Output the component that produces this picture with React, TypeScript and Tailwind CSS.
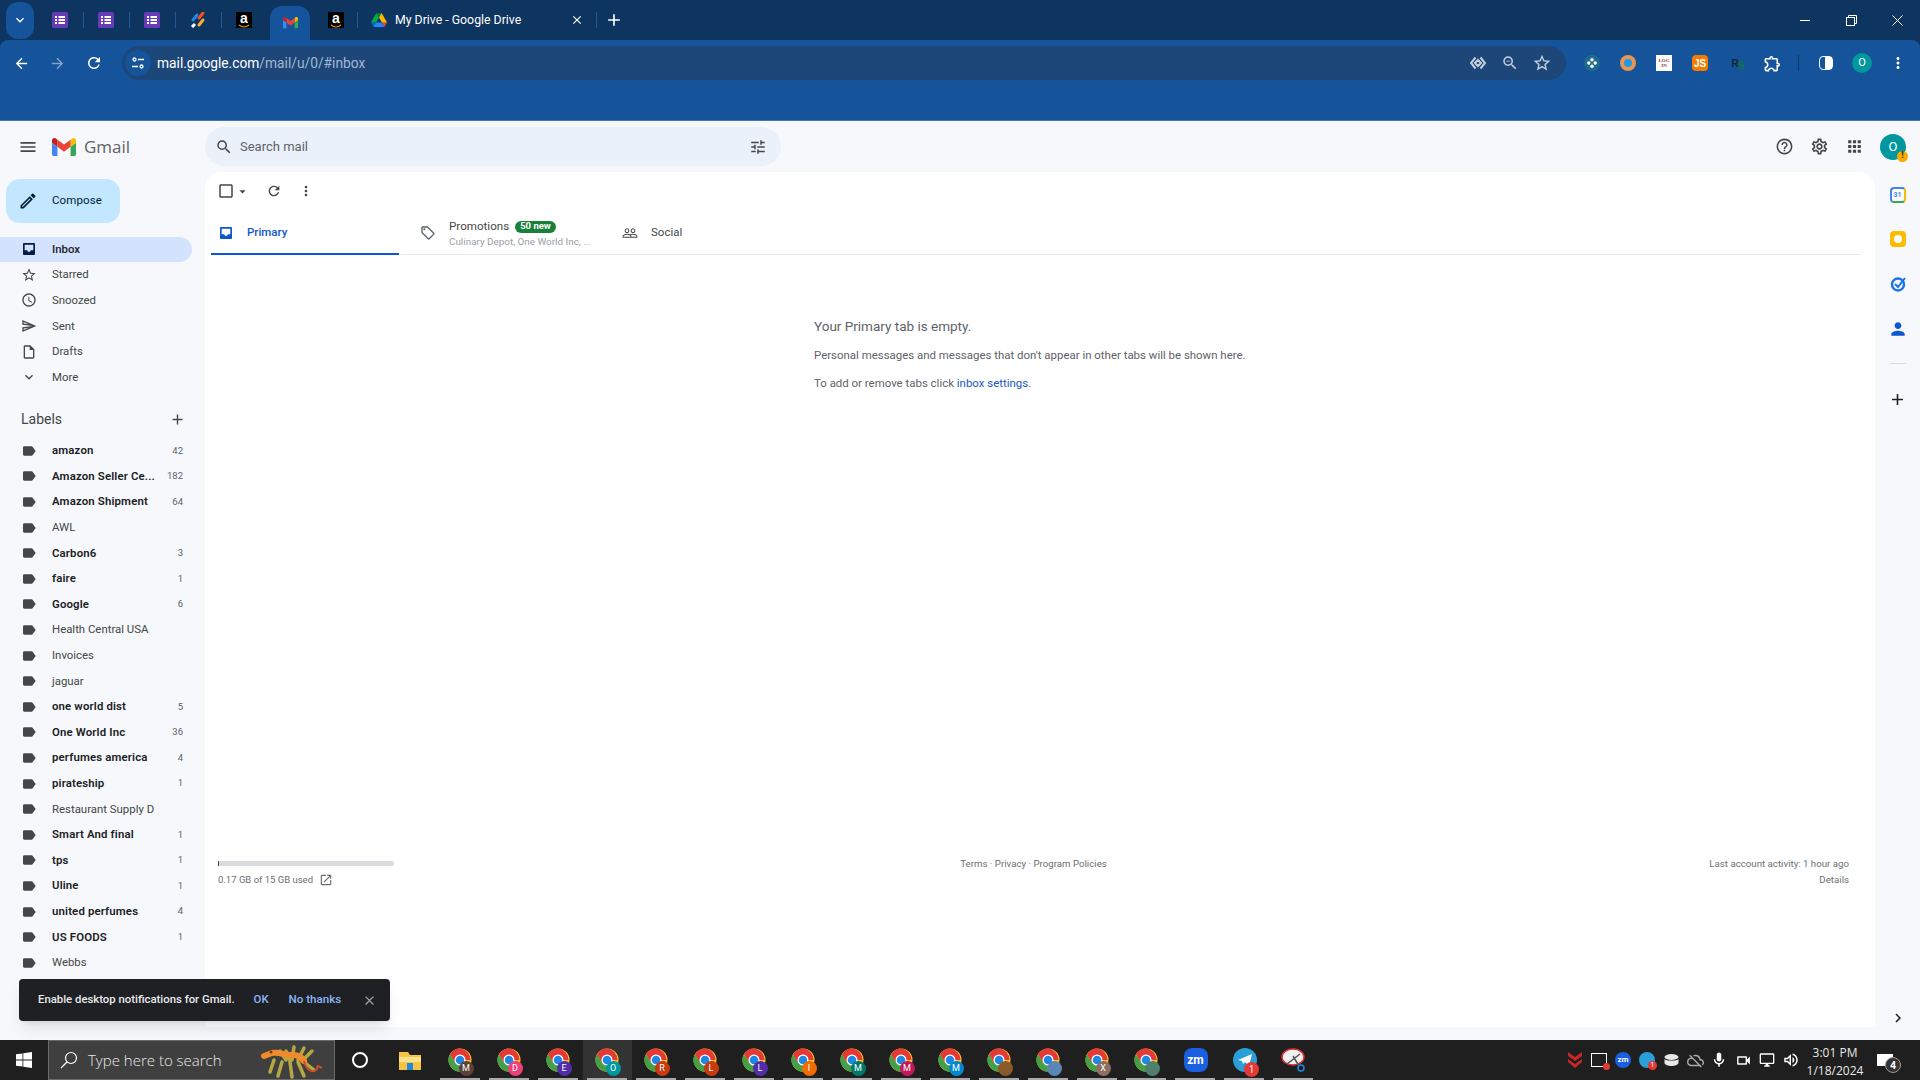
import type { ReactNode } from "react";
import {
  MdAdd,
  MdApps,
  MdArrowBack,
  MdArrowDropDown,
  MdArrowForward,
  MdCheckBoxOutlineBlank,
  MdChevronRight,
  MdClose,
  MdExpandMore,
  MdHelpOutline,
  MdLabel,
  MdMenu,
  MdMoreVert,
  MdOpenInNew,
  MdOutlineCreate,
  MdOutlineExtension,
  MdOutlineInsertDriveFile,
  MdOutlineLocalOffer,
  MdOutlineSend,
  MdOutlineSettings,
  MdOutlineStarBorder,
  MdOutlineWatchLater,
  MdPeopleOutline,
  MdRefresh,
  MdSearch,
  MdStarBorder,
  MdTune,
  MdZoomOut,
  MdPerson,
  MdOutlineMic,
  MdOutlineVideocam,
  MdOutlineDesktopWindows,
  MdOutlineVolumeUp,
  MdOutlineCloudOff,
} from "react-icons/md";

const labels = [
  { name: "amazon", count: "42", bold: true },
  { name: "Amazon Seller Ce...", count: "182", bold: true },
  { name: "Amazon Shipment", count: "64", bold: true },
  { name: "AWL", count: "", bold: false },
  { name: "Carbon6", count: "3", bold: true },
  { name: "faire", count: "1", bold: true },
  { name: "Google", count: "6", bold: true },
  { name: "Health Central USA", count: "", bold: false },
  { name: "Invoices", count: "", bold: false },
  { name: "jaguar", count: "", bold: false },
  { name: "one world dist", count: "5", bold: true },
  { name: "One World Inc", count: "36", bold: true },
  { name: "perfumes america", count: "4", bold: true },
  { name: "pirateship", count: "1", bold: true },
  { name: "Restaurant Supply D", count: "", bold: false },
  { name: "Smart And final", count: "1", bold: true },
  { name: "tps", count: "1", bold: true },
  { name: "Uline", count: "1", bold: true },
  { name: "united perfumes", count: "4", bold: true },
  { name: "US FOODS", count: "1", bold: true },
  { name: "Webbs", count: "", bold: false },
];

const chromeWindows = [
  { letter: "M", color: "#5d4037" },
  { letter: "D", color: "#ec407a" },
  { letter: "E", color: "#512da8" },
  { letter: "O", color: "#00979e", active: true },
  { letter: "R", color: "#c53a0e" },
  { letter: "L", color: "#c53a0e" },
  { letter: "L", color: "#512da8" },
  { letter: "I", color: "#ef6c00" },
  { letter: "M", color: "#00796b" },
  { letter: "M", color: "#c2185b" },
  { letter: "M", color: "#0288d1" },
  { letter: "", color: "#8a5a2b" },
  { letter: "", color: "#5b86b8" },
  { letter: "X", color: "#8d6e63" },
  { letter: "", color: "#4f7f6d" },
];

function InboxIcon({ color }: { color: string }) {
  return (
    <svg width="16" height="16" viewBox="0 0 24 24" fill={color}>
      <path fillRule="evenodd" d="M4.5 3h15A1.5 1.5 0 0 1 21 4.5v15a1.5 1.5 0 0 1-1.5 1.5h-15A1.5 1.5 0 0 1 3 19.5v-15A1.5 1.5 0 0 1 4.5 3zM5.5 5.5v8.5h4a2.5 2.5 0 0 0 5 0h4V5.5z" />
    </svg>
  );
}

function GmailLogo({ size = 24 }: { size?: number }) {
  return (
    <svg width={size} height={(size * 66) / 88} viewBox="52 42 88 66">
      <path fill="#4285f4" d="M58 108h14V74L52 59v43c0 3.32 2.69 6 6 6" />
      <path fill="#34a853" d="M120 108h14c3.32 0 6-2.69 6-6V59l-20 15" />
      <path fill="#fbbc04" d="M120 48v26l20-15v-8c0-7.42-8.47-11.65-14.4-7.2" />
      <path fill="#ea4335" d="M72 74V48l24 18 24-18v26L96 92" />
      <path fill="#c5221f" d="M52 51v8l20 15V48l-5.6-4.2c-5.94-4.45-14.4-.22-14.4 7.2" />
    </svg>
  );
}

function DriveLogo() {
  return (
    <svg width="16" height="14" viewBox="0 0 87.3 78">
      <path d="m6.6 66.85 3.85 6.65c.8 1.4 1.95 2.5 3.3 3.3l13.75-23.8h-27.5c0 1.55.4 3.1 1.2 4.5z" fill="#0066da" />
      <path d="m43.65 25-13.75-23.8c-1.35.8-2.5 1.9-3.3 3.3l-25.4 44a9.06 9.06 0 0 0 -1.2 4.5h27.5z" fill="#00ac47" />
      <path d="m73.55 76.8c1.35-.8 2.5-1.9 3.3-3.3l1.6-2.75 7.65-13.25c.8-1.4 1.2-2.95 1.2-4.5h-27.502l5.852 11.5z" fill="#ea4335" />
      <path d="m43.65 25 13.75-23.8c-1.35-.8-2.9-1.2-4.5-1.2h-18.5c-1.6 0-3.15.45-4.5 1.2z" fill="#00832d" />
      <path d="m59.8 53h-32.3l-13.75 23.8c1.35.8 2.9 1.2 4.5 1.2h50.8c1.6 0 3.15-.45 4.5-1.2z" fill="#2684fc" />
      <path d="m73.4 26.5-12.7-22c-.8-1.4-1.95-2.5-3.3-3.3l-13.75 23.8 16.15 28h27.45c0-1.55-.4-3.1-1.2-4.5z" fill="#ffba00" />
    </svg>
  );
}

function FormsIcon() {
  return (
    <svg width="16" height="16" viewBox="0 0 16 16">
      <rect width="16" height="16" rx="1.5" fill="#673ab7" />
      <path d="M3 4h2v2H3zM6.5 4H13v2H6.5zM3 7h2v2H3zM6.5 7H13v2H6.5zM3 10h2v2H3zM6.5 10H13v2H6.5z" fill="#fff" />
    </svg>
  );
}

function AmazonIcon() {
  return (
    <div className="relative flex h-4 w-4 flex-col items-center bg-black">
      <span className="font-['Liberation_Sans',sans-serif] text-[14px] leading-[13px] font-bold text-white">a</span>
      <svg className="absolute bottom-0 left-0.5" width="12" height="4" viewBox="0 0 12 4">
        <path d="M1 1c3 2.4 7 2.4 10 0" stroke="#f90" strokeWidth="1.2" fill="none" />
      </svg>
    </div>
  );
}

function TaskIcon() {
  return (
    <svg width="16" height="16" viewBox="0 0 16 16">
      <path d="M9 6l4-5" stroke="#f4511e" strokeWidth="3" strokeLinecap="round" />
      <path d="M3 8l4-5" stroke="#1e88e5" strokeWidth="3" strokeLinecap="round" />
      <path d="M9 13l4-5" stroke="#fbb02d" strokeWidth="3" strokeLinecap="round" />
      <path d="M2 15l3-3" stroke="#fff" strokeWidth="3" />
    </svg>
  );
}

function ChromeBall({ size = 24 }: { size?: number }) {
  return (
    <svg width={size} height={size} viewBox="0 0 48 48">
      <circle cx="24" cy="24" r="23" fill="#fbc02d" />
      <path d="M24 1A23 23 0 0 0 4 12.5L14 30l10-6h21a23 23 0 0 0-21-23z" fill="#e53935" />
      <path d="M4 12.5A23 23 0 0 0 24 47l10-17-20 0z" fill="#43a047" />
      <circle cx="24" cy="24" r="11" fill="#fff" />
      <circle cx="24" cy="24" r="8.5" fill="#1e88e5" />
    </svg>
  );
}

function Sep() {
  return <div className="h-4 w-px bg-[#1f5a96]" />;
}

function TabStrip() {
  return (
    <div className="flex h-10 items-center bg-[#0e3460] text-white">
      <div className="ml-1.5 flex h-[37px] w-7 items-center justify-center rounded-xl bg-[#15539a]">
        <MdExpandMore size={16} />
      </div>
      <div className="ml-[18px] flex items-center">
        <FormsIcon />
        <div className="mx-[14.5px]"><Sep /></div>
        <FormsIcon />
        <div className="mx-[14.5px]"><Sep /></div>
        <FormsIcon />
        <div className="mx-[14.5px]"><Sep /></div>
        <TaskIcon />
        <div className="mx-[14.5px]"><Sep /></div>
        <AmazonIcon />
      </div>
      <div className="mt-[6px] ml-[18px] flex h-[34px] w-10 items-center justify-center rounded-t-xl bg-[#15539a]">
        <GmailLogo size={15} />
      </div>
      <div className="ml-[18px]"><AmazonIcon /></div>
      <div className="mx-[13px]"><Sep /></div>
      <DriveLogo />
      <span className="ml-[8px] w-[175px] font-['Roboto',sans-serif] text-[12.3px]">My Drive - Google Drive</span>
      <MdClose size={14} />
      <div className="ml-[12px]"><Sep /></div>
      <MdAdd size={20} className="ml-[7px]" />
      <div className="flex-1" />
      <div className="flex w-[138px] items-center">
        <div className="flex w-[46px] justify-center"><div className="h-px w-[10px] bg-white" /></div>
        <div className="flex w-[46px] justify-center">
          <svg width="11" height="11" viewBox="0 0 11 11" fill="none" stroke="#fff">
            <rect x="0.5" y="2.5" width="8" height="8" />
            <path d="M2.5 2.5v-2h8v8h-2" />
          </svg>
        </div>
        <div className="flex w-[46px] justify-center">
          <svg width="11" height="11" viewBox="0 0 11 11" stroke="#fff"><path d="M.5.5l10 10M10.5.5l-10 10" /></svg>
        </div>
      </div>
    </div>
  );
}

function Toolbar() {
  return (
    <div className="h-[81px] border-b border-[#3a7ab8] bg-[#0e3460]">
      <div className="h-20 rounded-t-lg bg-[#15539a] pt-1.5">
        <div className="flex h-[34px] items-center text-white">
          <MdArrowBack size={17} className="ml-[13px]" />
          <MdArrowForward size={17} className="ml-[19px] text-[#7fa3c9]" />
          <MdRefresh size={18} className="ml-[19px]" />
          <div className="ml-[19px] flex h-[34px] w-[1444px] items-center rounded-full bg-[#1c4778]">
            <div className="ml-[3px] flex h-[26px] w-[26px] items-center justify-center rounded-full bg-[#15539a]">
              <svg width="14" height="14" viewBox="0 0 14 14" fill="none" stroke="#fff" strokeWidth="1.3">
                <circle cx="3.5" cy="3.5" r="1.5" /><path d="M7 3.5h6M1 10.5h6" /><circle cx="10.5" cy="10.5" r="1.5" />
              </svg>
            </div>
            <span className="ml-[6px] font-['Roboto',sans-serif] text-[13.75px]">
              mail.google.com<span className="text-[#a3b8cf]">/mail/u/0/#inbox</span>
            </span>
            <div className="flex-1" />
            <svg width="16" height="14" viewBox="0 0 16 14" fill="none" stroke="#c5d0dc" strokeWidth="2">
              <path d="M5.5 1.5L1 7l4.500 5.500M10.500 1.500L15 7l-4.500 5.500M8 4l3 3-3 3-3-3z" />
            </svg>
            <MdZoomOut size={18} className="ml-[15px] text-[#c5d0dc]" />
            <MdStarBorder size={20} className="ml-[13px] text-[#c5d0dc]" />
            <div className="w-[14px]" />
          </div>
          <div className="ml-[18px] flex h-4 w-4 items-center justify-center rounded-full bg-[#1f6d8c]">
            <svg width="10" height="10" viewBox="0 0 10 10" fill="#fff"><circle cx="5" cy="1.800" r="1.700" /><circle cx="5" cy="8.200" r="1.700" /><circle cx="1.800" cy="5" r="1.700" /><circle cx="8.200" cy="5" r="1.700" /></svg>
          </div>
          <div className="ml-5 flex h-4 w-4 items-center justify-center rounded-full bg-[#e8954f]">
            <div className="h-2 w-2 rounded-full bg-[#1e9be8]" />
          </div>
          <div className="ml-5 flex h-4 w-4 items-center justify-center bg-white text-center font-['Liberation_Serif',serif] text-[5px] leading-none font-bold text-[#8c3a3a]">LOG IN</div>
          <div className="ml-5 flex h-4 w-4 items-center justify-center rounded-sm bg-[#f57c00] font-['Liberation_Sans',sans-serif] text-[10px] font-bold">JS</div>
          <div className="ml-[22px] flex h-4 w-4 items-center justify-center font-['Liberation_Sans',sans-serif] text-[10px] font-bold text-[#14233a]">
            R<span className="-ml-px translate-y-0.5 text-[#0c7a3e]">S</span>
          </div>
          <MdOutlineExtension size={19} className="ml-[17px]" />
          <div className="ml-[16px] h-[16px] w-px bg-[#0e3460]" />
          <div className="ml-[20px] flex h-[14px] w-[14px] rounded-sm border border-white">
            <div className="w-[5px]" />
            <div className="flex-1 bg-white" />
          </div>
          <div className="ml-[19px] flex h-5 w-5 items-center justify-center rounded-full bg-[#00979e] font-['Roboto',sans-serif] text-[11px]">O</div>
          <MdMoreVert size={18} className="ml-[17px]" />
        </div>
      </div>
    </div>
  );
}

function NavRow({ icon, label, active }: { icon: ReactNode; label: string; active?: boolean }) {
  return (
    <div className={`flex h-[25.6px] w-[192px] items-center rounded-r-full pl-[21px] text-[11.4px] ${active ? "bg-[#d3e3fd] font-medium text-[#202124]" : "text-[#444746]"}`}>
      <span className={`flex w-[31px] ${active ? "text-[#041e49]" : "text-[#444746]"}`}>{icon}</span>
      {label}
    </div>
  );
}

function Sidebar() {
  return (
    <div className="w-[205px] shrink-0">
      <div className="mt-[7px] ml-1.5 flex h-[44px] w-[114px] items-center rounded-[14px] bg-[#c2e7ff] text-[11.5px] text-[#001d35]">
        <MdOutlineCreate size={20} className="ml-[12px]" />
        <span className="ml-[14px] tracking-[0.1px]">Compose</span>
      </div>
      <div className="mt-[13.5px]">
        <NavRow active label="Inbox" icon={<InboxIcon color="#041e49" />} />
        <NavRow label="Starred" icon={<MdOutlineStarBorder size={16} />} />
        <NavRow label="Snoozed" icon={<MdOutlineWatchLater size={16} />} />
        <NavRow label="Sent" icon={<MdOutlineSend size={16} />} />
        <NavRow label="Drafts" icon={<MdOutlineInsertDriveFile size={16} />} />
        <NavRow label="More" icon={<MdExpandMore size={16} />} />
      </div>
      <div className="mt-[16.5px] flex h-[26px] w-[192px] items-center justify-between pr-[6px] pl-[21px] text-[14px] text-[#444746]">
        Labels
        <MdAdd size={17} />
      </div>
      <div className="mt-[5.5px]">
        {labels.map((l) => (
          <div key={l.name} className="flex h-[25.6px] w-[192px] items-center pr-[9px] pl-[21px] text-[11.4px]">
            <MdLabel size={16} className="w-[31px] shrink-0 pr-[15px] text-[#444746]" />
            <span className={l.bold ? "flex-1 font-semibold tracking-[0.15px] text-[#202124]" : "flex-1 text-[#444746]"}>{l.name}</span>
            <span className="text-[9.5px] text-[#5f6368]">{l.count}</span>
          </div>
        ))}
      </div>
    </div>
  );
}

function MailPanel() {
  return (
    <div className="flex w-[1670px] flex-col rounded-t-2xl bg-white text-[#5f6368]">
      <div className="flex h-[38px] items-center pl-[12px] text-[#444746]">
        <MdCheckBoxOutlineBlank size={18} />
        <MdArrowDropDown size={15} className="ml-0" />
        <MdRefresh size={16} className="ml-[16px]" />
        <MdMoreVert size={16} className="ml-[16px]" />
      </div>
      <div className="mx-1.5 flex h-[45px] w-[1649px] border-b border-[#e6e8eb]">
        <div className="-mb-px flex w-[188px] items-center border-b-2 border-[#0b57d0] pt-0.5 pl-[7px] text-[11.5px] font-medium text-[#0b57d0]">
          <InboxIcon color="#0b57d0" />
          <span className="ml-[13px]">Primary</span>
        </div>
        <div className="flex w-[211px] items-center pt-0.5 pl-[21px]">
          <MdOutlineLocalOffer size={16} />
          <div className="ml-[13px]">
            <div className="flex h-[16px] items-center text-[11.6px] text-[#444746]">
              Promotions
              <span className="ml-[6px] flex h-3 items-center rounded-full bg-[#188038] px-[5px] text-[9.5px] font-bold text-white">50 new</span>
            </div>
            <div className="text-[9.9px] leading-[13px] text-[#9aa0a6]">Culinary Depot, One World Inc, ...</div>
          </div>
        </div>
        <div className="flex items-center pt-0.5 pl-[12px] text-[11.5px] text-[#444746]">
          <MdPeopleOutline size={16} />
          <span className="ml-[13px]">Social</span>
        </div>
      </div>
      <div className="h-[600px] pt-[62px] pl-[609px]">
        <div className="text-[13.5px] leading-[18px]">Your Primary tab is empty.</div>
        <div className="mt-[12px] text-[11.45px] leading-[16px]">Personal messages and messages that don't appear in other tabs will be shown here.</div>
        <div className="mt-[12px] text-[11.45px] leading-[16px]">
          To add or remove tabs click <span className="text-[#1a56c4]">inbox settings</span>.
        </div>
      </div>
      <div className="grid grid-cols-3 pr-[26px] pl-[13px] text-[9.7px] leading-[16px] text-[#6b6f73]">
        <div>
          <div className="mt-1.5 h-[5px] w-[176px] rounded-sm bg-[#dadce0]">
            <div className="h-[5px] w-px bg-[#444746]" />
          </div>
          <div className="mt-1.5 flex items-center text-[9.5px]">
            0.17 GB of 15 GB used
            <MdOpenInNew size={14} className="ml-[6px]" />
          </div>
        </div>
        <div className="pt-px text-center">Terms · Privacy · Program Policies</div>
        <div className="pt-px text-right">
          <div>Last account activity: 1 hour ago</div>
          <div>Details</div>
        </div>
      </div>
    </div>
  );
}

function RightRail() {
  return (
    <div className="flex w-[45px] flex-col items-center text-[#202124]">
      <div className="mt-[15px] flex h-4 w-4 items-center justify-center rounded-sm border-2 border-[#4285f4] border-r-[#fbbc04] border-b-[#34a853] bg-white text-[7px] font-bold text-[#4285f4]">31</div>
      <div className="mt-[28px] flex h-4 w-4 items-center justify-center rounded-sm bg-[#fbbc04]">
        <div className="h-2 w-2 rounded-full bg-white" />
      </div>
      <svg className="mt-[29px]" width="16" height="16" viewBox="0 0 16 16" fill="none">
        <circle cx="8" cy="8.500" r="6" stroke="#1a73e8" strokeWidth="2.400" />
        <path d="M5 8l3 3 7-9" stroke="#1a73e8" strokeWidth="2" />
      </svg>
      <MdPerson size={20} className="mt-[27px] text-[#0b57d0]" />
      <div className="mt-[24px] h-px w-4 bg-[#dadce0]" />
      <MdAdd size={19} className="mt-[26px]" />
      <div className="flex-1" />
      <MdChevronRight size={18} />
    </div>
  );
}

function TrayIcon({ children }: { children: ReactNode }) {
  return <div className="flex h-10 w-6 items-center justify-center text-white">{children}</div>;
}

function SeaDragon() {
  return (
    <svg className="absolute top-px right-2" width="66" height="38" viewBox="0 0 66 38" fill="none">
      <path d="M20 9l6 9M26 9l4 10M34 5l-2 13M44 6l-6 12M52 9l-10 10M14 18l-4 12M22 20l-4 14M30 20l2 15M38 20l6 14M44 20l10 8" stroke="#b5a742" strokeWidth="3.500" strokeLinecap="round" />
      <path d="M4 14l8-3c8-1 12 2 20 2s10 3 12 6" stroke="#ef8b2c" strokeWidth="6" strokeLinecap="round" />
      <path d="M44 19c2 9 8 12 12 9s-2-6 6-2" stroke="#c9502b" strokeWidth="2" />
      <circle cx="11" cy="10" r="1.500" fill="#7a3b10" />
    </svg>
  );
}

function Taskbar() {
  return (
    <div className="flex h-10 items-center bg-[#1f1f1f] font-['Open_Sans',sans-serif] text-white">
      <div className="flex w-12 justify-center">
        <svg width="16" height="16" viewBox="0 0 16 16" fill="#fff">
          <path d="M0 2.300l6.500-.9v6.200H0zM7.300 1.300L16 0v7.600H7.300zM0 8.400h6.500v6.200L0 13.700zM7.300 8.400H16V16l-8.700-1.200z" />
        </svg>
      </div>
      <div className="relative flex h-10 w-[287px] items-center border border-[#6b6b6b] bg-[#3f3f3f]">
        <svg className="ml-[11px]" width="18" height="18" viewBox="0 0 18 18" fill="none" stroke="#fff" strokeWidth="1.200">
          <circle cx="11" cy="7" r="5.500" /><path d="M7 11l-6 6" />
        </svg>
        <span className="ml-[10px] text-[15px] font-light text-[#e8e8e8]">Type here to search</span>
        <SeaDragon />
      </div>
      <div className="flex w-[50px] justify-center">
        <div className="h-4 w-4 rounded-full border-2 border-white" />
      </div>
      <div className="flex w-[50px] justify-center">
        <svg width="22" height="20" viewBox="0 0 22 20">
          <path d="M0 2h9l2 3h11v15H0z" fill="#f6c445" />
          <rect x="0" y="7" width="22" height="5" fill="#ffe08a" />
          <rect x="8" y="13" width="6" height="7" fill="#1e88e5" />
        </svg>
      </div>
      <div className="ml-px flex">
        {chromeWindows.map((w, i) => (
          <div key={i} className={`relative flex h-10 w-[49px] items-center justify-center ${w.active ? "bg-[#333333]" : ""}`}>
            <div className="relative -translate-x-px">
              <ChromeBall />
              <div className="absolute -right-0.5 -bottom-1 flex h-[15px] w-[15px] items-center justify-center rounded-full font-['Roboto',sans-serif] text-[9px]" style={{ backgroundColor: w.color }}>
                {w.letter}
              </div>
            </div>
            <div className="absolute right-[5px] bottom-0 left-[4px] h-0.5 bg-[#a9a9a9]" />
          </div>
        ))}
        <div className="relative flex h-10 w-[49px] items-center justify-center">
          <div className="flex h-6 w-6 items-center justify-center rounded-lg bg-[#1a5fe0] font-['Roboto',sans-serif] text-[12px] font-bold">zm</div>
          <div className="absolute right-[5px] bottom-0 left-[4px] h-0.5 bg-[#a9a9a9]" />
        </div>
        <div className="relative flex h-10 w-[49px] items-center justify-center">
          <div className="flex h-6 w-6 items-center justify-center rounded-full bg-[#2a9fd8]">
            <svg width="14" height="12" viewBox="0 0 14 12" fill="#fff"><path d="M0 6l14-6-3 12-4-4-2 2-1-3z" /></svg>
          </div>
          <div className="absolute right-[10px] bottom-[3px] flex h-[15px] w-[15px] items-center justify-center rounded-full bg-[#e53935] text-[10px]">1</div>
          <div className="absolute right-[5px] bottom-0 left-[4px] h-0.5 bg-[#a9a9a9]" />
        </div>
        <div className="relative flex h-10 w-[49px] items-center justify-center">
          <svg width="26" height="24" viewBox="0 0 26 24" fill="none">
            <ellipse cx="12" cy="9" rx="11" ry="8" fill="#f1f1f1" stroke="#d33" strokeWidth="1.500" />
            <path d="M6 16l13-10M12 8l6 10" stroke="#555" strokeWidth="1.500" />
            <circle cx="20" cy="20" r="3" stroke="#1e88e5" strokeWidth="1.500" />
          </svg>
          <div className="absolute right-[5px] bottom-0 left-[4px] h-0.5 bg-[#a9a9a9]" />
        </div>
      </div>
      <div className="flex-1" />
      <TrayIcon>
        <svg width="14" height="16" viewBox="0 0 14 16" fill="#c62828"><path d="M0 0l7 5 7-5v4L7 9 0 4zM0 7l7 5 7-5v3l-7 6-7-6z" /></svg>
      </TrayIcon>
      <TrayIcon>
        <div className="relative h-[14px] w-4 border border-white">
          <div className="absolute -right-1 -bottom-1 h-[7px] w-[7px] rounded-full bg-[#e53935]" />
        </div>
      </TrayIcon>
      <TrayIcon>
        <div className="flex h-4 w-4 items-center justify-center rounded-full bg-[#1a5fe0] font-['Roboto',sans-serif] text-[8px] font-bold">zm</div>
      </TrayIcon>
      <TrayIcon>
        <div className="relative h-4 w-4 rounded-full bg-[#2a9fd8]">
          <div className="absolute -right-0.5 -bottom-0.5 flex h-[9px] w-[9px] items-center justify-center rounded-full bg-[#e53935] text-[7px]">1</div>
        </div>
      </TrayIcon>
      <TrayIcon>
        <svg width="15" height="12" viewBox="0 0 15 12" fill="#e8e8e8">
          <ellipse cx="7.500" cy="3" rx="7" ry="3" /><path d="M.5 5c1 2 13 2 14 0v4c-1 4-13 4-14 0z" />
        </svg>
      </TrayIcon>
      <TrayIcon><MdOutlineCloudOff size={17} className="text-[#a9a9a9]" /></TrayIcon>
      <TrayIcon><MdOutlineMic size={18} /></TrayIcon>
      <TrayIcon><MdOutlineVideocam size={17} /></TrayIcon>
      <TrayIcon><MdOutlineDesktopWindows size={16} /></TrayIcon>
      <TrayIcon><MdOutlineVolumeUp size={18} /></TrayIcon>
      <div className="w-[64px] pt-[3px] text-center text-[12px] leading-[18px] whitespace-nowrap text-[#e8e8e8]">
        <div>3:01 PM</div>
        <div>1/18/2024</div>
      </div>
      <div className="flex w-[53px] pl-[10px]">
        <div className="relative h-3 w-4 bg-white">
          <div className="absolute -right-2 -bottom-[7px] flex h-4 w-4 items-center justify-center rounded-full border border-[#999] bg-[#333] text-[10px] font-bold">4</div>
        </div>
      </div>
    </div>
  );
}

export default function App() {
  return (
    <div className="relative flex h-[1080px] w-[1920px] flex-col overflow-hidden bg-[#f6f8fc] font-['Roboto',sans-serif]">
      <TabStrip />
      <Toolbar />
      <div className="flex h-[51px] items-center text-[#444746]">
        <MdMenu size={20} className="ml-[18px]" />
        <div className="ml-[14px]"><GmailLogo size={24} /></div>
        <span className="ml-[8px] w-[121px] font-['Open_Sans',sans-serif] text-[17px] text-[#5f6368]">Gmail</span>
        <div className="flex h-[39px] w-[576px] items-center rounded-full bg-[#eaf1fb]">
          <MdSearch size={18} className="ml-[10px]" />
          <span className="ml-[7px] text-[13px] text-[#5f6368]">Search mail</span>
          <div className="flex-1" />
          <MdTune size={18} className="mr-[14px]" />
        </div>
        <div className="flex-1" />
        <MdHelpOutline size={19} />
        <MdOutlineSettings size={19} className="ml-[16px]" />
        <MdApps size={19} className="ml-[16px]" />
        <div className="relative mr-[14px] ml-[16px] flex h-[26px] w-[26px] items-center justify-center rounded-full bg-[#00979e] text-[13px] text-white">
          O
          <div className="absolute -right-0.5 -bottom-0.5 flex h-[11px] w-[11px] items-center justify-center rounded-full bg-[#f9ab00] text-[9px] font-bold text-[#202124]">!</div>
        </div>
      </div>
      <div className="flex h-[868px] items-stretch overflow-hidden">
        <Sidebar />
        <div className="flex pb-[13px]">
          <MailPanel />
        </div>
        <div className="flex pb-[13px]">
          <RightRail />
        </div>
      </div>
      <Taskbar />
      <div className="absolute top-[979px] left-[19px] flex h-[42px] w-[371px] items-center rounded bg-[#1f2023] pl-[19px] text-[11.35px] font-medium text-[#e8eaed] shadow-lg">
        Enable desktop notifications for Gmail.
        <span className="ml-[19px] text-[#8ab4f8]">OK</span>
        <span className="ml-[20px] text-[11.6px] text-[#8ab4f8]">No thanks</span>
        <MdClose size={15} className="ml-[21px] text-[#9aa0a6]" />
      </div>
    </div>
  );
}
